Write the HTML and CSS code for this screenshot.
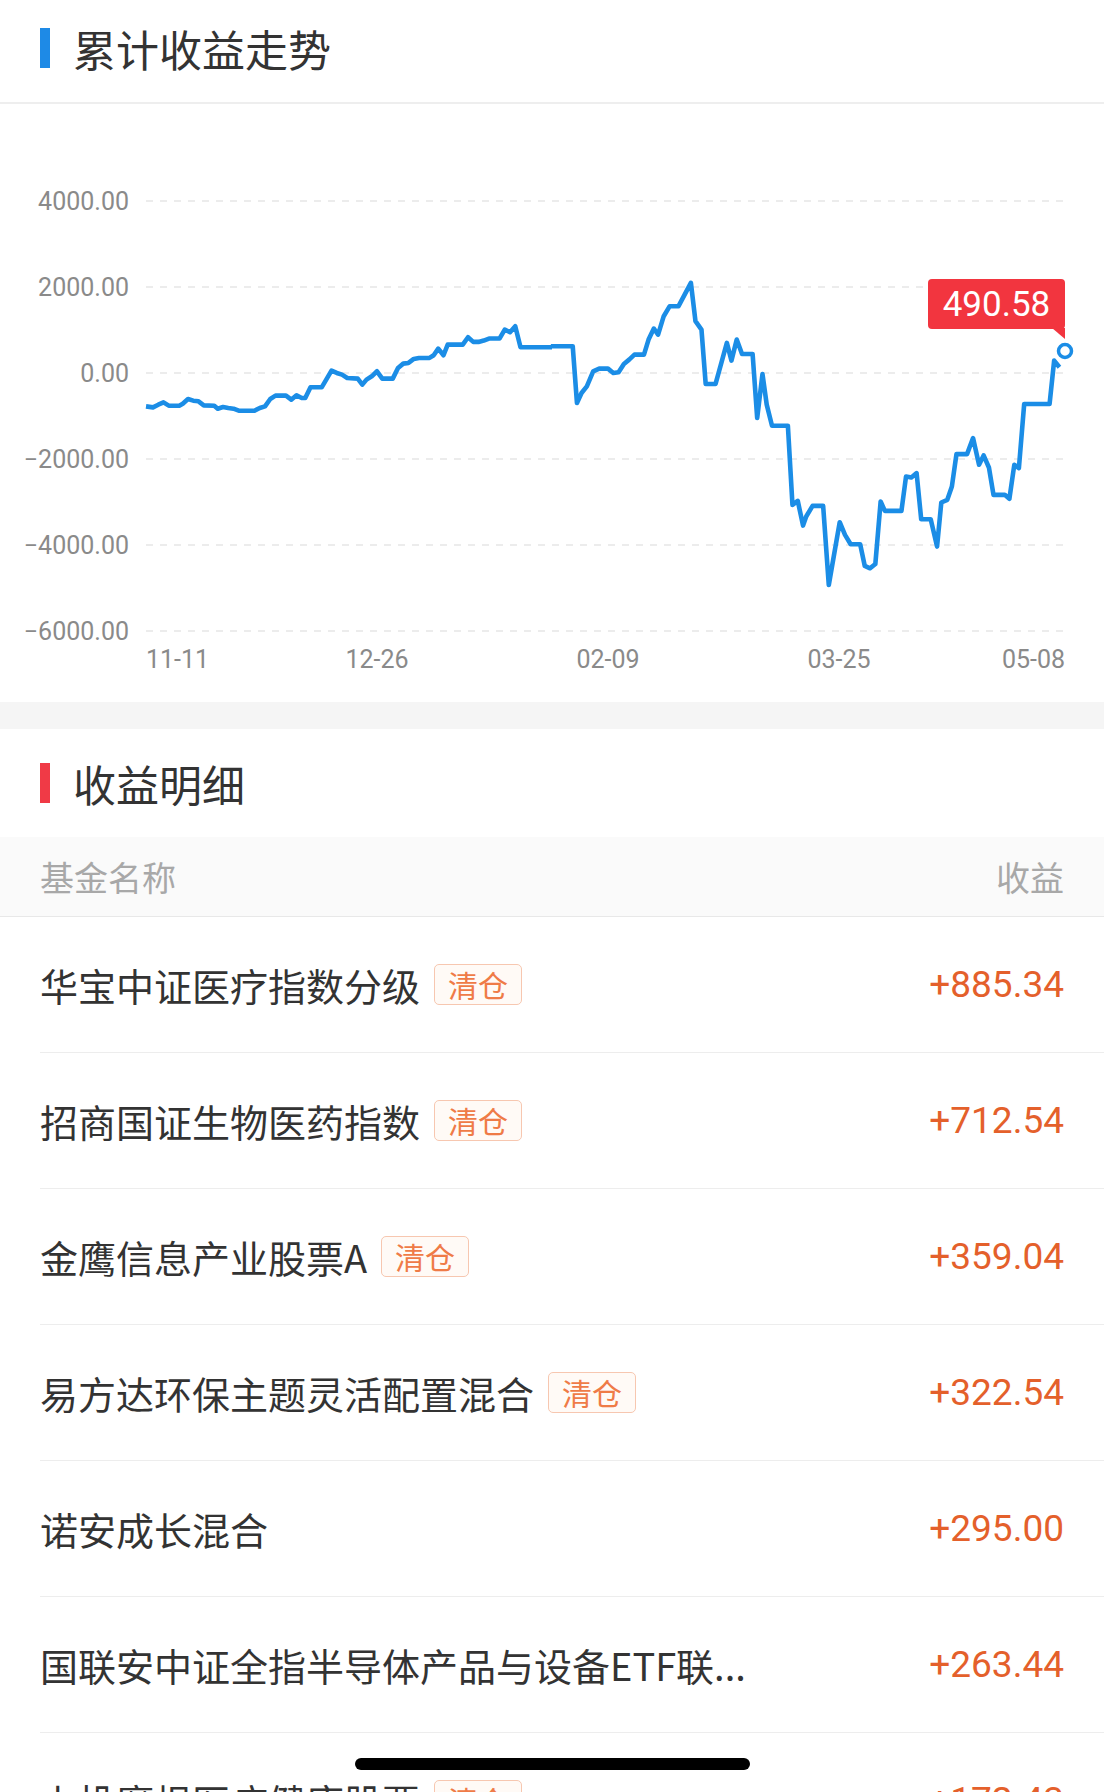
FILE: index.html
```html
<!doctype html>
<html>
<head>
<meta charset="utf-8">
<title>收益明细</title>
<link rel="stylesheet" href="styles.css">
</head>
<body>
<div class="page">
    <div class="sec-title trend"><i class="bar blue"></i>累计收益走势</div>

    <div class="chart">
        <svg width="1104" height="598" viewBox="0 104 1104 598">
            <g class="grid">
                <line x1="146" y1="201" x2="1064" y2="201"/>
                <line x1="146" y1="287" x2="1064" y2="287"/>
                <line x1="146" y1="373" x2="1064" y2="373"/>
                <line x1="146" y1="459" x2="1064" y2="459"/>
                <line x1="146" y1="545" x2="1064" y2="545"/>
                <line x1="146" y1="631" x2="1064" y2="631"/>
            </g>
            <g class="ylab">
                <text x="129" y="201" dy="0.35em">4000.00</text>
                <text x="129" y="287" dy="0.35em">2000.00</text>
                <text x="129" y="373" dy="0.35em">0.00</text>
                <text x="129" y="459" dy="0.35em">−2000.00</text>
                <text x="129" y="545" dy="0.35em">−4000.00</text>
                <text x="129" y="631" dy="0.35em">−6000.00</text>
            </g>
            <g class="xlab">
                <text class="first" x="146" y="659" dy="0.35em">11-11</text>
                <text x="377" y="659" dy="0.35em">12-26</text>
                <text x="608" y="659" dy="0.35em">02-09</text>
                <text x="839" y="659" dy="0.35em">03-25</text>
                <text class="last" x="1065" y="659" dy="0.35em">05-08</text>
            </g>
            <!-- 曲线：前后两段，按取样坐标缩放 -->
            <g transform="translate(146 201) scale(0.35 0.3339) translate(-410 -90)">
                <polyline class="line" points="410,705 430,708 445,700 460,693 475,703 505,703 515,697 530,683 545,688 560,690 575,702 605,703 615,712 630,707 645,710 660,712 675,718 720,718 735,710 750,705 765,683 780,673 810,673 825,685 840,672 855,680 865,680 880,648 912,648 925,625 940,598 955,605 970,610 985,620 1015,622 1028,640 1040,625 1055,615 1070,600 1085,622 1115,622 1130,590 1145,577 1160,575 1175,563 1190,560 1220,560 1232,552 1245,532 1260,552 1272,520 1315,520 1330,498 1345,512 1360,512 1375,508 1390,502 1420,502 1435,475 1450,483 1465,465 1480,528 1570,528"/>
            </g>
            <g transform="translate(608 201) scale(0.3527 0.3339) translate(-160 -90)">
                <polyline class="line" points="-2,525 60,525 72,695 85,665 100,645 118,600 135,592 160,592 175,605 190,603 205,578 220,565 235,550 262,550 275,505 290,472 302,490 318,435 335,405 360,405 395,335 408,450 425,475 437,638 465,638 497,515 510,568 525,505 540,548 570,548 583,740 598,608 610,700 625,763 670,763 683,1000 698,988 713,1062 722,1035 740,1003 770,1003 786,1240 817,1052 832,1090 848,1118 875,1118 888,1183 903,1190 918,1177 933,990 945,1018 992,1018 1005,915 1020,918 1035,905 1048,1043 1075,1043 1093,1125 1105,993 1122,985 1135,945 1148,848 1178,848 1195,800 1212,880 1225,852 1240,888 1253,970 1285,970 1298,982 1312,880 1325,890 1340,698 1412,698 1425,568 1440,588"/>
            </g>
            <circle class="dot" cx="1065" cy="351" r="6.5"/>
            <g class="tip">
                <rect x="928" y="279" width="137" height="50" rx="4"/>
                <polygon points="1052,328 1065,328 1065,339"/>
                <text x="996.5" y="304" dy="0.35em">490.58</text>
            </g>
        </svg>
    </div>

    <div class="gap"></div>

    <div class="sec-title"><i class="bar red"></i>收益明细</div>
    <div class="thead"><span>基金名称</span><span>收益</span></div>
    <ul class="list">
        <li><div class="name">华宝中证医疗指数分级<span class="tag">清仓</span></div><span class="val">+885.34</span></li>
        <li><div class="name">招商国证生物医药指数<span class="tag">清仓</span></div><span class="val">+712.54</span></li>
        <li><div class="name">金鹰信息产业股票A<span class="tag">清仓</span></div><span class="val">+359.04</span></li>
        <li><div class="name">易方达环保主题灵活配置混合<span class="tag">清仓</span></div><span class="val">+322.54</span></li>
        <li><div class="name">诺安成长混合</div><span class="val">+295.00</span></li>
        <li><div class="name">国联安中证全指半导体产品与设备ETF联...</div><span class="val">+263.44</span></li>
        <li><div class="name">上投摩根医疗健康股票<span class="tag">清仓</span></div><span class="val">+172.43</span></li>
    </ul>

    <div class="home-bar"></div>
</div>
</body>
</html>
```

FILE: styles.css
```css
*{ margin:0; padding:0; list-style:none; box-sizing:border-box; }
html,body{ height:1792px; overflow:hidden; background:#fff; }
body{ font-family:"Noto Sans CJK SC", Roboto, sans-serif; color:#333; }
.page{ width:1104px; position:relative; }

.sec-title{ display:flex; align-items:center; height:108px; padding:0 40px; font-size:43px; line-height:1; color:#333; }
.sec-title.trend{ height:104px; padding-bottom:6px; border-bottom:2px solid #eeeeee; }
.bar{ display:block; width:10px; height:40px; margin-right:23px; }
.bar.blue{ background:#1e8ae6; }
.bar.red{ background:#f03a46; }

.chart{ height:598px; }
.chart svg{ display:block; }
.grid line{ stroke:#e6e6e6; stroke-width:1.5; stroke-dasharray:7 7; }
.ylab text, .xlab text{ font-family:Roboto, sans-serif; font-size:25px; fill:#8a8a8a; }
.ylab text{ text-anchor:end; }
.xlab text{ text-anchor:middle; }
.xlab text.first{ text-anchor:start; }
.xlab text.last{ text-anchor:end; }
.line{ fill:none; stroke:#1b8de6; stroke-width:4.6; stroke-linejoin:round; vector-effect:non-scaling-stroke; }
.dot{ fill:#fff; stroke:#1b8de6; stroke-width:3.5; }
.tip rect, .tip polygon{ fill:#f2353f; }
.tip text{ font-family:Roboto, sans-serif; font-size:35px; fill:#fff; text-anchor:middle; }

.gap{ height:27px; background:#f5f5f5; }

.thead{ display:flex; justify-content:space-between; align-items:center; height:80px; padding:0 40px; background:#fafafa; border-bottom:1px solid #e8e8e8; font-size:34px; color:#a8a8a8; }

.list li{ display:flex; justify-content:space-between; align-items:center; height:136px; margin-left:40px; padding-right:40px; border-bottom:1px solid #ededed; }
.name{ display:flex; align-items:center; font-size:38px; line-height:1; color:#333; white-space:nowrap; }
.tag{ display:block; margin-left:14px; padding:0 13px; height:41px; line-height:39px; font-size:30px; color:#ef7b47; background:#fffaf6; border:1px solid #f7c7b0; border-radius:5px; }
.val{ font-family:Roboto, sans-serif; font-size:37px; color:#e4602b; }

.home-bar{ position:fixed; left:50%; top:1758px; width:395px; height:12px; margin-left:-197px; background:#000; border-radius:6px; }
```
